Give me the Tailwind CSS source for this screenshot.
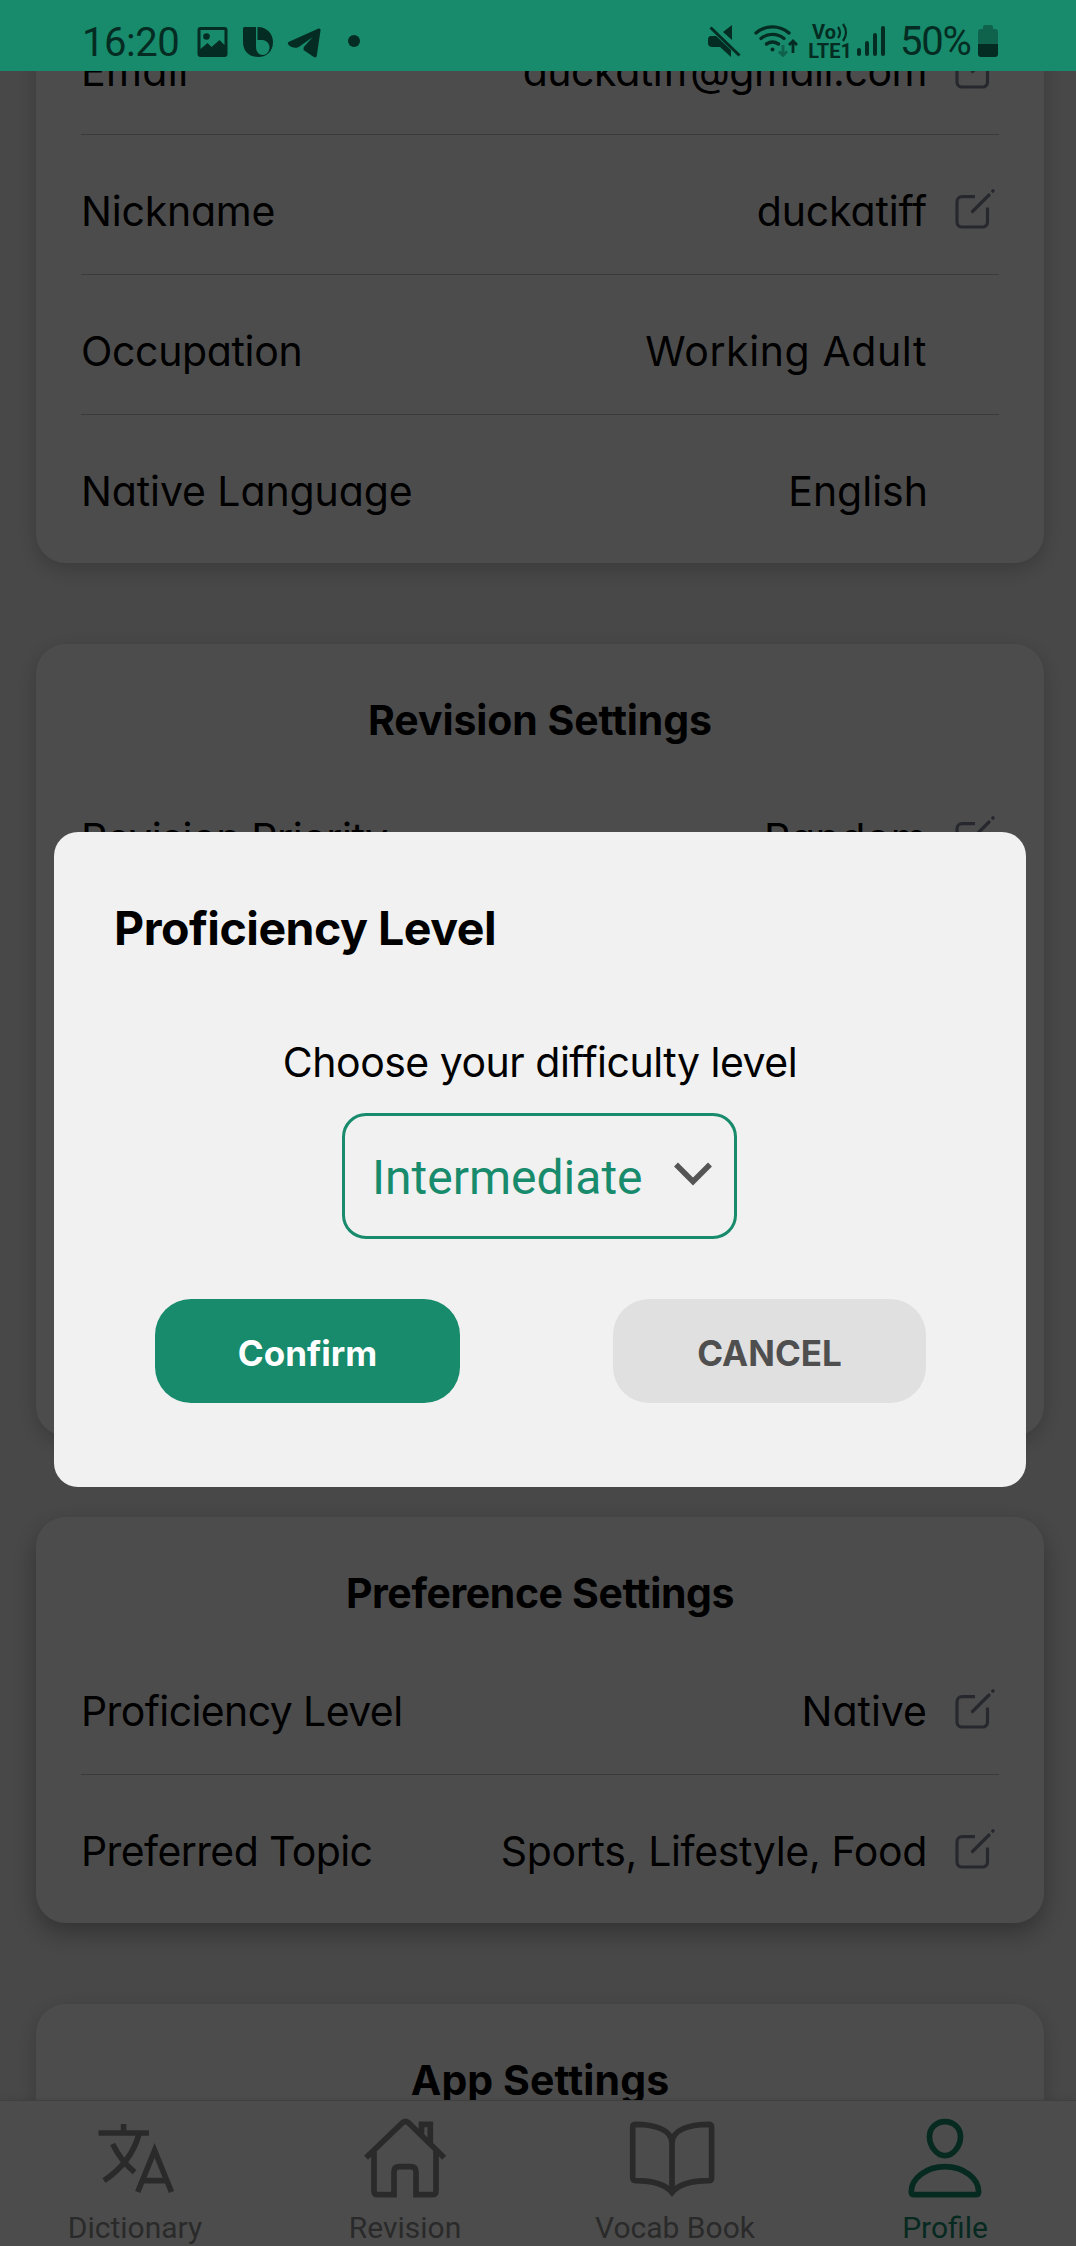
<!DOCTYPE html>
<html lang="en">
<head>
<meta charset="utf-8">
<title>Profile</title>
<script src="https://cdn.jsdelivr.net/npm/@tailwindcss/browser@4"></script>
</head>
<body class="relative flex h-[2246px] w-[1076px] flex-col overflow-hidden bg-[#f1f1f1] font-['Inter',sans-serif] text-[41px] leading-[52px] text-black [font-feature-settings:'cv11']">

<svg class="hidden">
  <symbol id="edit" viewBox="0 0 44 44">
    <g fill="none" stroke="#82859a" stroke-width="3.2" stroke-linecap="round">
      <path d="M22 9.700H9a5 5 0 0 0-5 5V35a5 5 0 0 0 5 5h20.500a5 5 0 0 0 5-5V20.500" stroke-linecap="butt"/>
      <path d="M19.500 24.500 36 8"/>
      <path d="M39.900 4.100l.1-.1" stroke-width="3.600"/>
    </g>
  </symbol>
</svg>

<!-- Status bar -->
<header class="flex h-[71px] shrink-0 justify-between bg-[#178b6c] pr-[78px] pl-[82px] font-['Roboto',sans-serif] text-[#052c22]">
  <div class="flex pt-[19px]">
    <span class="w-[115px] text-[40px] leading-[48px] tracking-[-0.5px]">16:20</span>
    <svg class="mt-2 h-[30px] w-[31px]" viewBox="0 0 30 30" fill="currentColor"><path fill-rule="evenodd" d="M3 0h24a3 3 0 0 1 3 3v24a3 3 0 0 1-3 3H3a3 3 0 0 1-3-3V3a3 3 0 0 1 3-3zm0 3v19l7-6 4 4 8-7 5 5V3z"/><circle cx="9" cy="9.500" r="3.300"/></svg>
    <svg class="mt-2 ml-[15px] h-[30px] w-[30px]" viewBox="0 0 30 30" fill="currentColor"><path fill-rule="evenodd" d="M1.500 0H15c9 0 15 7 15 15 0 9-6 15-15 15S0 24 0 15V1.500Q0 0 1.500 0zM13 0v20c0 4.500 3 8 6.500 8 4 0 7-3.500 7-7.500 0-5-4-7.500-8-7.500h-4V0z"/></svg>
    <svg class="mt-[9px] ml-3.5 h-[30px] w-[34px]" viewBox="0 0 34 30" fill="currentColor"><path d="M1.500 14 31 .8c1.800-.7 2.700.2 2.500 1.700l-3.700 25c-.3 2-1.500 2.500-3 1.500l-10.300-7 .3-3 9-10-14 10c-2 1.400-8 1-10.500-2.500-.6-.9-.6-2 .2-2.500z"/></svg>
    <span class="mt-4 ml-[27px] size-[12px] rounded-full bg-current"></span>
  </div>
  <div class="flex pt-[19px]">
    <svg class="mt-[6px] h-[32px] w-[33px]" viewBox="0 0 33 32" fill="currentColor"><path d="M24 0v15L15 7zM3 11h5l15 14v7L12 22H5c-3 0-5-1-5-4v-3c0-3 1-4 3-4z"/><path d="M2.500 2.500l29 28" stroke="currentColor" stroke-width="3"/></svg>
    <svg class="mt-[4px] ml-[13px] h-[34px] w-[44px]" viewBox="0 0 44 34" fill="none" stroke="currentColor" stroke-width="3.300" stroke-linecap="round"><path d="M2 10a25 25 0 0 1 33 0M7 15.500a18 18 0 0 1 23 0M12.500 21a11 11 0 0 1 12 0"/><circle cx="18.500" cy="26.500" r="2" fill="currentColor" stroke="none"/><path d="M39 30V19M35 22l4-4 4 4" stroke-width="2.800" stroke-linecap="butt"/><path d="M29 22v10M25 28.500l4 4 4-4" stroke="#0f634d" stroke-width="2.800" stroke-linecap="butt"/></svg>
    <div class="ml-[10px] flex w-[44px] flex-col items-center pt-[4px] text-[20px] leading-[18px] font-bold"><span class="flex">Vo<svg class="ml-px h-[19px] w-[11px]" viewBox="0 0 11 19" fill="none" stroke="currentColor" stroke-width="2.200"><path d="M1 4q4 5.500 0 11M6 1q6 8.500 0 17"/></svg></span><span>LTE1</span></div>
    <div class="mt-[7px] ml-[5px] flex h-[30px] items-end gap-[4px]"><i class="h-[8px] w-[4px] rounded-full bg-current"></i><i class="h-[15px] w-[4px] rounded-full bg-current"></i><i class="h-[23px] w-[4px] rounded-full bg-current"></i><i class="h-[30px] w-[4px] rounded-full bg-current"></i></div>
    <span class="ml-[15px] w-[78px] text-[40px] leading-[46px] tracking-[-1.200px] whitespace-nowrap">50%</span>
    <svg class="mt-[6px] h-[32px] w-[20px]" viewBox="0 0 20 32"><path fill="#0f634d" d="M5 2q0-2 2-2h6q2 0 2 2v2h2q3 0 3 3v12H0V7q0-3 3-3h2z"/><path fill="#052c22" d="M0 19h20v10q0 3-3 3H3q-3 0-3-3z"/></svg>
  </div>
</header>

<!-- Settings cards -->
<main class="flex h-[2029px] w-[1080px] shrink-0 flex-col gap-[81px] overflow-hidden pr-9 pl-9">
  <section class="-mt-[76px] h-[568px] shrink-0 rounded-[30px] bg-white px-[45px] shadow-[0_6px_20px_rgba(0,0,0,0.2)]">
    <div class="flex h-[140px] items-center border-b border-[#c4c4c4] pt-[13px]">
      <span class="grow tracking-[0.4px]">Email</span><span class="tracking-[-0.45px]">duckatiff@gmail.com</span><svg class="-mt-1 mr-[2px] ml-[26px] size-11"><use href="#edit"/></svg>
    </div>
    <div class="flex h-[140px] items-center border-b border-[#c4c4c4] pt-[13px]">
      <span class="grow tracking-[-0.2px]">Nickname</span><span class="tracking-[-0.15px]">duckatiff</span><svg class="-mt-1 mr-[2px] ml-[26px] size-11"><use href="#edit"/></svg>
    </div>
    <div class="flex h-[140px] items-center border-b border-[#c4c4c4] pt-[13px]">
      <span class="grow tracking-[-0.35px]">Occupation</span><span class="mr-[72px] tracking-[0.6px]">Working Adult</span>
    </div>
    <div class="flex h-[140px] items-center pt-[12px]">
      <span class="grow tracking-[-0.1px]">Native Language</span><span class="mr-[71px]">English</span>
    </div>
  </section>

  <section class="h-[792px] shrink-0 rounded-[30px] bg-white px-[45px] shadow-[0_6px_20px_rgba(0,0,0,0.2)]">
    <h2 class="flex h-[118px] items-center justify-center pt-[34px] font-[650] tracking-[-0.1px]">Revision Settings</h2>
    <div class="flex h-[140px] items-center border-b border-[#c4c4c4] pt-[13px]">
      <span class="grow tracking-[-0.4px]">Revision Priority</span><span class="tracking-[0.4px]">Random</span><svg class="-mt-1 mr-[2px] ml-[26px] size-11"><use href="#edit"/></svg>
    </div>
  </section>

  <section class="h-[406px] shrink-0 rounded-[30px] bg-white px-[45px] shadow-[0_10px_24px_rgba(0,0,0,0.3)]">
    <h2 class="flex h-[118px] items-center justify-center pt-[34px] font-[650] tracking-[-0.4px]">Preference Settings</h2>
    <div class="flex h-[140px] items-center border-b border-[#c4c4c4] pt-[13px]">
      <span class="grow tracking-[-0.6px]">Proficiency Level</span><span>Native</span><svg class="-mt-1 mr-[2px] ml-[26px] size-11"><use href="#edit"/></svg>
    </div>
    <div class="flex h-[140px] items-center pt-[12px]">
      <span class="grow tracking-[-0.6px]">Preferred Topic</span><span class="tracking-[-0.35px]">Sports, Lifestyle, Food</span><svg class="-mt-1 mr-[2px] ml-[26px] size-11"><use href="#edit"/></svg>
    </div>
  </section>

  <section class="h-[406px] shrink-0 rounded-[30px] bg-white px-[45px] shadow-[0_6px_20px_rgba(0,0,0,0.2)]">
    <h2 class="flex h-[118px] items-center justify-center pt-[34px] font-[650] tracking-[0.1px]">App Settings</h2>
  </section>
</main>

<!-- Bottom tabs -->
<nav class="grid h-[146px] w-[1080px] shrink-0 grid-cols-4 border-t border-[#d8d8d8] bg-white pt-[14px] font-['Roboto',sans-serif] text-[30px] leading-[36px] text-[#8e8e8e] shadow-[0_0_8px_rgba(0,0,0,0.1)]">
  <div class="flex flex-col items-center gap-[7px]">
    <svg class="size-[88px] overflow-visible" viewBox="0 0 88 88" fill="none" stroke="currentColor" stroke-width="5.700"><path d="M7.500 18H58M32.600 9v9M48 19Q40.500 47 13 65.700M21.600 29Q30 46 43.600 57.300M46.700 77 63.600 35.500 80.500 77M52 65.700h23"/></svg>
    <span>Dictionary</span>
  </div>
  <div class="flex flex-col items-center gap-[7px]">
    <svg class="size-[88px] overflow-visible" viewBox="0 0 88 88" fill="none" stroke="currentColor" stroke-width="5.700"><path d="M5 42.700 41.800 7.500q2.700-2 5.400 0L83.200 42.700M60.500 22V9.300h8.800v19M13 34v42q0 3.700 3.700 3.700H33V57q0-5.300 5.300-5.300h11.400Q55 51.700 55 57v22.700h16.300q3.700 0 3.700-3.700V34"/></svg>
    <span>Revision</span>
  </div>
  <div class="flex flex-col items-center gap-[7px]">
    <svg class="size-[88px] overflow-visible" viewBox="0 0 88 88" fill="none" stroke="currentColor" stroke-width="5.700"><path d="M41 77.500C34 69 22 65.700 4.500 65.700q-2.800 0-2.800-2.700V12q0-2.700 2.800-2.700C24 9.300 41 15 41 28 41 15 58 9.300 77.800 9.300q2.800 0 2.800 2.700v51q0 2.700-2.800 2.700C60 65.700 48 69 41 77.500zV26"/></svg>
    <span>Vocab Book</span>
  </div>
  <div class="flex flex-col items-center gap-[7px] text-[#178b6c]">
    <svg class="size-[88px] overflow-visible" viewBox="0 0 88 88" fill="none" stroke="currentColor" stroke-width="5.700"><path d="M44 6.700c9 0 15.500 6.500 15.500 15S53 40.700 44 40.700 28.500 30.200 28.500 21.700 35 6.700 44 6.700zM44 51.700c19 0 33.600 12 33.600 25q0 3-3 3H13.300q-3 0-3-3c0-13 14.700-25 33.700-25z"/></svg>
    <span>Profile</span>
  </div>
</nav>

<!-- Modal -->
<div class="absolute inset-x-0 top-[71px] bottom-0 bg-black/70 pt-[761px] pl-[54px]">
  <div class="flex h-[655px] w-[972px] flex-col rounded-[24px] bg-[#f1f1f1] pt-[66px]">
    <h1 class="pl-[60px] text-[46.500px] leading-[60px] font-[650] tracking-[-0.5px]">Proficiency Level</h1>
    <p class="mt-[78px] text-center leading-[52px] tracking-[-0.5px]">Choose your difficulty level</p>
    <div class="mt-[25px] ml-[288px] flex h-[126px] w-[395px] items-center justify-between rounded-[24px] border-[3px] border-[#178b6c] pr-[22px] pl-[27px] font-['Roboto',sans-serif] text-[48px] text-[#178b6c]">
      <span class="pt-[3px]">Intermediate</span>
      <svg class="-mt-[5px] h-[24px] w-[38px]" viewBox="0 0 38 24" fill="none" stroke="#555" stroke-width="5.500"><path d="M2 2.500l17 17 17-17"/></svg>
    </div>
    <div class="mt-[60px] flex justify-between pr-[100px] pl-[101px] text-[35px] font-[650]">
      <button class="h-[104px] w-[305px] rounded-[36px] bg-[#178b6c] pt-[3px] text-white">Confirm</button>
      <button class="h-[104px] w-[313px] rounded-[36px] bg-[#e0e0e0] pt-[3px] text-[#4f4f4f]">CANCEL</button>
    </div>
  </div>
</div>
</body>
</html>
